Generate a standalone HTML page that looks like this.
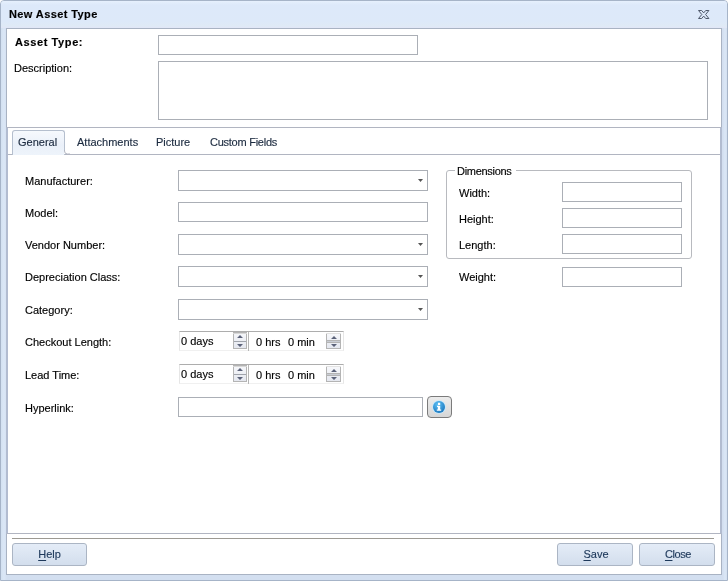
<!DOCTYPE html>
<html><head><meta charset="utf-8">
<style>
*{box-sizing:border-box;margin:0;padding:0}
html,body{width:728px;height:581px;overflow:hidden;background:#fff}
body{font-family:"Liberation Sans",sans-serif;font-size:11px;color:#000;position:relative}
.t,.btn{will-change:transform;-webkit-text-stroke:0.15px currentColor}
.a{position:absolute}
.t{position:absolute;white-space:nowrap;line-height:11px;font-size:11px}
.frame{left:0;top:0;width:728px;height:581px;border:1px solid #a6b4c8;border-radius:4px 4px 0 0;
 background:linear-gradient(to right,#d3e1f1 0,#dbe7f6 3px,#d3dff0 6px,#d3dff0 722px,#dbe7f6 724px,#cbd8ea 728px)}
.title{left:1px;top:1px;width:726px;height:27px;background:linear-gradient(#e6f0fd,#dde9fa 4px,#dde9f9 20px,#dfeaf6 25px,#e2e6f7);border-radius:3px 3px 0 0}
.content{left:6px;top:28px;width:716px;height:547px;border:1px solid #a9b3c3;background:#fff}
.inp{position:absolute;border:1px solid #abafb6;background:#fff}
.btn{position:absolute;border:1px solid #abb5c4;border-radius:3px;background:linear-gradient(#e4ecf7,#d3deed);color:#1e395b;text-align:center;line-height:21px}
u{text-underline-offset:1.5px}
.lbl{position:absolute;white-space:nowrap;font-size:11px;line-height:11px}
</style></head><body>
<div class="a frame"></div>
<div class="a title"></div>
<div class="t" style="left:9px;top:9px;font-weight:bold;letter-spacing:0.4px">New Asset Type</div>
<div class="a content"></div>

<!-- header -->
<div class="t" style="left:15px;top:37px;font-weight:bold;letter-spacing:0.6px">Asset Type:</div>
<div class="t" style="left:14px;top:63px">Description:</div>
<div class="inp" style="left:158px;top:35px;width:260px;height:20px"></div>
<div class="inp" style="left:158px;top:61px;width:550px;height:59px"></div>

<!-- tab control -->
<div class="a" style="left:6px;top:127px;width:716px;height:407px;border:1px solid #b1b5c1;border-left:2px solid #b2bcd0;border-right:2px solid #b2bcd0;background:#fff"></div>
<div class="a" style="left:8px;top:154px;width:712px;height:1px;background:#b1b5c1"></div>
<div class="a" style="left:12px;top:130px;width:53px;height:25px;border:1px solid #b5bfce;border-bottom:none;border-radius:3px 3px 0 0;background:linear-gradient(#f6f9fd,#eaf0f9 60%,#eef4fb)"></div>
<svg class="a" style="left:60px;top:148px" width="10" height="10"><rect x="4" y="2" width="6" height="4" fill="#fff"/><path d="M4.5 2 v1 q0 3 3 3 h3" stroke="#b1b5c1" fill="none"/></svg>
<div class="t" style="left:18px;top:137px;color:#1b2a3f">General</div>
<div class="t" style="left:77px;top:137px;color:#1b2a3f">Attachments</div>
<div class="t" style="left:156px;top:137px;color:#1b2a3f">Picture</div>
<div class="t" style="left:210px;top:137px;color:#1b2a3f;letter-spacing:-0.25px">Custom Fields</div>

<!-- labels -->
<div class="t" style="left:25px;top:176px">Manufacturer:</div>
<div class="t" style="left:25px;top:208px">Model:</div>
<div class="t" style="left:25px;top:240px">Vendor Number:</div>
<div class="t" style="left:25px;top:272px">Depreciation Class:</div>
<div class="t" style="left:25px;top:305px">Category:</div>
<div class="t" style="left:25px;top:337px">Checkout Length:</div>
<div class="t" style="left:25px;top:370px">Lead Time:</div>
<div class="t" style="left:25px;top:403px">Hyperlink:</div>

<div class="inp" style="left:178px;top:170px;width:250px;height:21px"></div>
<div class="inp" style="left:178px;top:202px;width:250px;height:20px"></div>
<div class="inp" style="left:178px;top:234px;width:250px;height:21px"></div>
<div class="inp" style="left:178px;top:266px;width:250px;height:21px"></div>
<div class="inp" style="left:178px;top:299px;width:250px;height:21px"></div>
<div class="inp" style="left:178px;top:397px;width:245px;height:20px"></div>

<!-- dimensions -->
<div class="a" style="left:446px;top:170px;width:246px;height:89px;border:1px solid #b8babf;border-radius:3px"></div>
<div class="a" style="left:455px;top:165px;width:61px;height:10px;background:#fff"></div>
<div class="t" style="left:457px;top:166px;letter-spacing:-0.3px">Dimensions</div>
<div class="t" style="left:459px;top:188px">Width:</div>
<div class="t" style="left:459px;top:214px">Height:</div>
<div class="t" style="left:459px;top:240px">Length:</div>
<div class="t" style="left:459px;top:272px">Weight:</div>
<div class="inp" style="left:562px;top:182px;width:120px;height:20px"></div>
<div class="inp" style="left:562px;top:208px;width:120px;height:20px"></div>
<div class="inp" style="left:562px;top:234px;width:120px;height:20px"></div>
<div class="inp" style="left:562px;top:267px;width:120px;height:20px"></div>

<!-- combo arrows -->
<svg class="a" style="left:0;top:0" width="728" height="581">
<g fill="#555">
<path d="M418 179h5l-2.5 3z"/>
<path d="M418 243h5l-2.5 3z"/>
<path d="M418 275h5l-2.5 3z"/>
<path d="M418 308h5l-2.5 3z"/>
</g>
<!-- close X -->
<path d="M698.5 10.5h3.2l2 2.4l2-2.4h3.2l-3.3 4l3.3 4h-3.2l-2-2.4l-2 2.4h-3.2l3.3-4z" stroke="#4f596b" stroke-width="1" fill="none" stroke-linejoin="round"/>
</svg>

<!-- spinners -->
<div class="a" style="left:179px;top:331px;width:165px;height:20px;border-top:1px solid #adadad;border-left:1px solid #e6e6e6;border-right:1px solid #e6e6e6;border-bottom:1px solid #f0f0f0"></div>
<div class="a" style="left:248px;top:332px;width:1px;height:19px;background:#b5b5b5"></div>
<div class="a" style="left:179px;top:364px;width:165px;height:20px;border-top:1px solid #adadad;border-left:1px solid #e6e6e6;border-right:1px solid #e6e6e6;border-bottom:1px solid #f0f0f0"></div>
<div class="a" style="left:248px;top:365px;width:1px;height:19px;background:#b5b5b5"></div>
<svg class="a" style="left:0;top:0" width="728" height="581">
<defs><linearGradient id="sg" x1="0" y1="0" x2="0" y2="1"><stop offset="0" stop-color="#f7f8fb"/><stop offset="1" stop-color="#e4e7ef"/></linearGradient></defs>
<g id="sp1">
<rect x="233.5" y="332.5" width="13" height="16" fill="url(#sg)" stroke="#b4b4b4"/>
<path d="M233 333.5h14" stroke="#d8d8d8"/>
<path d="M234 341.5h12" stroke="#a0a4ac"/>
<path d="M237 338h6l-3-3z M237 344h6l-3 3z" fill="#5b6279"/>
<rect x="326.5" y="333.5" width="14" height="15" fill="url(#sg)" stroke="#b4b4b4"/>
<path d="M326 333.5h15" stroke="#e2e2e2"/>
<path d="M327 341.5h13" stroke="#c8ccd4"/>
<path d="M327 340.5h13 M327 342.5h13" stroke="#b4b4b4"/>
<path d="M331 339h6l-3-3z M331 344h6l-3 3z" fill="#5b6279"/>
</g>
<use href="#sp1" y="33"/>
</svg>
<div class="t" style="left:181px;top:336px">0 days</div>
<div class="t" style="left:256px;top:337px">0 hrs</div>
<div class="t" style="left:288px;top:337px">0 min</div>
<div class="t" style="left:181px;top:369px">0 days</div>
<div class="t" style="left:256px;top:370px">0 hrs</div>
<div class="t" style="left:288px;top:370px">0 min</div>

<!-- info button -->
<div class="a" style="left:427px;top:396px;width:25px;height:22px;border:1px solid #7b7b7b;border-radius:4px;background:linear-gradient(#ececec,#d6d6d6)"></div>
<svg class="a" style="left:427px;top:396px" width="25" height="22">
<defs><radialGradient id="ig" cx="0.4" cy="0.3" r="0.8"><stop offset="0" stop-color="#5cc0f5"/><stop offset="1" stop-color="#1670b8"/></radialGradient></defs>
<circle cx="12" cy="11" r="6.8" fill="#bfe8ff"/>
<circle cx="12" cy="11" r="6" fill="url(#ig)"/>
<path d="M11 6.8h2.2v2.2h-2.2z M10 9.8h3.2v3.6h1v1.4h-4.4v-1.4h1v-2.4h-0.8z" fill="#fff"/>
</svg>

<!-- bottom -->
<div class="a" style="left:12px;top:538px;width:702px;height:1px;background:#9d9a93"></div>
<div class="btn" style="left:12px;top:543px;width:75px;height:23px"><u>H</u>elp</div>
<div class="btn" style="left:557px;top:543px;width:76px;height:23px;padding-left:2px"><u>S</u>ave</div>
<div class="btn" style="left:639px;top:543px;width:76px;height:23px;padding-left:2px;letter-spacing:-0.4px"><u>C</u>lose</div>
</body></html>
